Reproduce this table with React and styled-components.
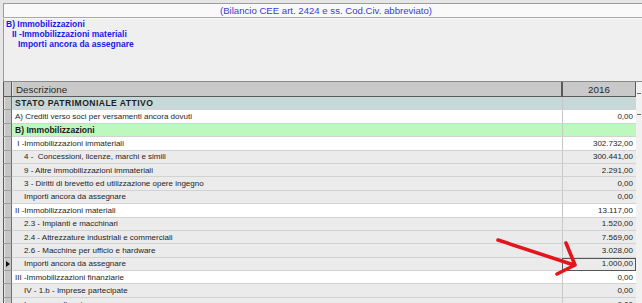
import React from 'react';
import styled, { createGlobalStyle } from 'styled-components';

const ROW_H = '13.4px';

const GlobalStyle = createGlobalStyle`
  html, body {
    margin: 0;
    padding: 0;
    background: #ececec;
    overflow: hidden;
  }
  body {
    font-family: "Liberation Sans", Arial, sans-serif;
  }
`;

const Page = styled.div`
  position: relative;
  width: 642px;
  height: 303px;
  overflow: hidden;
  padding: 3px 0 0 3px;
  box-sizing: border-box;
  background: #e6e6e6;
`;

const TitleBar = styled.div`
  height: 15px;
  box-sizing: border-box;
  background: #f9f9f9;
  border-top: 1px solid #9c9c9c;
  border-left: 1px solid #9c9c9c;
  border-bottom: 1px solid #a8a8a8;
  display: flex;
  align-items: center;
  justify-content: center;
  font-size: 9.6px;
  color: #3c3cd4;
  padding-left: 6px;
`;

const InfoPanel = styled.div`
  height: 63px;
  box-sizing: border-box;
  background: #efefef;
  border-top: 1px solid #fafafa;
  border-left: 1px solid #9c9c9c;
  padding: 1px 0 0 1px;
  display: flex;
  flex-direction: column;
`;

const InfoLine = styled.div`
  font-weight: bold;
  font-size: 8.5px;
  line-height: 9.8px;
  color: #1a1ae8;
  padding-left: ${({ $indent }) => $indent}px;
  white-space: pre;
`;

const GridArea = styled.div`
  display: flex;
  border-top: 1px solid #8a8a8a;
`;

const Table = styled.div`
  width: 633px;
  display: flex;
  flex-direction: column;
`;

const ScrollStrip = styled.div`
  flex: 1;
  background: #f1f1f1;
  display: flex;
  flex-direction: column;
  gap: 20px;
  padding-top: 11px;
`;

const ScrollMark = styled.div`
  width: 4px;
  height: 1px;
  margin-left: 1px;
  background: #6a6a6a;
`;

const HeaderRow = styled.div`
  display: grid;
  grid-template-columns: 9px 550px 74px;
  height: 15px;
  box-sizing: border-box;
  background: #c9c9c9;
  border-bottom: 1px solid #5a5a5a;
  font-size: 9.8px;
  color: #2a2a2a;
`;

const HeaderCell = styled.div`
  display: flex;
  align-items: center;
  justify-content: ${({ $center }) => ($center ? 'center' : 'flex-start')};
  padding-left: ${({ $center }) => ($center ? 0 : 3)}px;
  border-left: 1px solid ${({ $dark }) => ($dark ? '#5a5a5a' : '#e2e2e2')};
  border-right: 1px solid #5a5a5a;
  box-sizing: border-box;
`;

const ROW_BG = {
  section: '#c7d8d8',
  group: '#bdf8bd',
  white: '#ffffff',
  grey: '#ebebeb',
};

const Row = styled.div`
  display: grid;
  grid-template-columns: 9px 550px 74px;
  height: ${ROW_H};
  box-sizing: border-box;
  background: ${({ $kind }) => ROW_BG[$kind]};
`;

const Indicator = styled.div`
  background: #c6c6c6;
  border-left: 1px solid #5a5a5a;
  border-right: 1px solid #6e6e6e;
  border-bottom: 1px solid #9e9e9e;
  box-shadow: inset 1px 0 0 #e6e6e6;
  display: flex;
  align-items: center;
  justify-content: center;
  box-sizing: border-box;
`;

const Pointer = styled.span`
  width: 0;
  height: 0;
  border-top: 3.5px solid transparent;
  border-bottom: 3.5px solid transparent;
  border-left: 4px solid #111;
`;

const DescCell = styled.div`
  display: flex;
  align-items: center;
  box-sizing: border-box;
  border-bottom: 1px solid #d2d2d2;
  padding-left: ${({ $indent }) => $indent}px;
  font-size: ${({ $bold }) => ($bold ? '8.6px' : '8px')};
  font-weight: ${({ $bold }) => ($bold ? 'bold' : 'normal')};
  letter-spacing: ${({ $wide }) => ($wide ? '0.45px' : '0')};
  color: #1e1e1e;
  white-space: pre;
  overflow: hidden;
`;

const ValueCell = styled.div`
  display: flex;
  align-items: center;
  justify-content: flex-end;
  box-sizing: border-box;
  border-left: 1px solid #c8c8c8;
  border-bottom: 1px solid #d2d2d2;
  padding-right: 3px;
  font-size: 8px;
  color: #1e1e1e;
  outline: ${({ $focus }) => ($focus ? '1px solid #555' : 'none')};
  outline-offset: -1px;
`;

const Arrow = styled.svg`
  position: absolute;
  left: 0;
  top: 0;
  pointer-events: none;
`;

const rows = [
  { kind: 'section', text: 'STATO PATRIMONIALE ATTIVO', indent: 3, bold: true, wide: true },
  { kind: 'white', text: 'A) Crediti verso soci per versamenti ancora dovuti', indent: 3, value: '0,00' },
  { kind: 'group', text: 'B) Immobilizzazioni', indent: 3, bold: true },
  { kind: 'white', text: ' I -Immobilizzazioni immateriali', indent: 3, value: '302.732,00' },
  { kind: 'grey', text: '4 -  Concessioni, licenze, marchi e simili', indent: 12, value: '300.441,00' },
  { kind: 'grey', text: '9 - Altre immobilizzazioni immateriali', indent: 12, value: '2.291,00' },
  { kind: 'grey', text: '3 - Diritti di brevetto ed utilizzazione opere ingegno', indent: 12, value: '0,00' },
  { kind: 'grey', text: 'Importi ancora da assegnare', indent: 12, value: '0,00' },
  { kind: 'white', text: 'II -Immobilizzazioni materiali', indent: 3, value: '13.117,00' },
  { kind: 'grey', text: '2.3 - Impianti e macchinari', indent: 12, value: '1.520,00' },
  { kind: 'grey', text: '2.4 - Attrezzature industriali e commerciali', indent: 12, value: '7.569,00' },
  { kind: 'grey', text: '2.6 - Macchine per ufficio e hardware', indent: 12, value: '3.028,00' },
  { kind: 'grey', text: 'Importi ancora da assegnare', indent: 12, value: '1.000,00', current: true },
  { kind: 'white', text: 'III -Immobilizzazioni finanziarie', indent: 3, value: '0,00' },
  { kind: 'grey', text: 'IV - 1.b - Imprese partecipate', indent: 12, value: '0,00' },
  { kind: 'grey', text: 'Imprese collegate', indent: 12, value: '0,00' },
];

export default function App() {
  return (
    <>
      <GlobalStyle />
      <Page>
        <TitleBar>(Bilancio CEE art. 2424 e ss. Cod.Civ. abbreviato)</TitleBar>
        <InfoPanel>
          <InfoLine $indent={1}>B) Immobilizzazioni</InfoLine>
          <InfoLine $indent={7}>II -Immobilizzazioni materiali</InfoLine>
          <InfoLine $indent={13}>Importi ancora da assegnare</InfoLine>
        </InfoPanel>
        <GridArea>
          <Table>
            <HeaderRow>
              <HeaderCell $dark />
              <HeaderCell>Descrizione</HeaderCell>
              <HeaderCell $center $dark>2016</HeaderCell>
            </HeaderRow>
            {rows.map((r, i) => (
              <Row key={i} $kind={r.kind}>
                <Indicator>{r.current && <Pointer />}</Indicator>
                <DescCell $indent={r.indent} $bold={r.bold} $wide={r.wide}>
                  {r.text}
                </DescCell>
                <ValueCell $focus={r.current}>{r.value}</ValueCell>
              </Row>
            ))}
          </Table>
          <ScrollStrip>
            <ScrollMark />
            <ScrollMark />
          </ScrollStrip>
        </GridArea>
        <Arrow width="642" height="303" viewBox="0 0 642 303">
          <g stroke="#e3161d" strokeWidth="3.6" strokeLinecap="round" strokeLinejoin="round" fill="none">
            <path d="M498 240 L574 265" />
            <path d="M566 243 L575 265 L557 274" />
          </g>
        </Arrow>
      </Page>
    </>
  );
}
